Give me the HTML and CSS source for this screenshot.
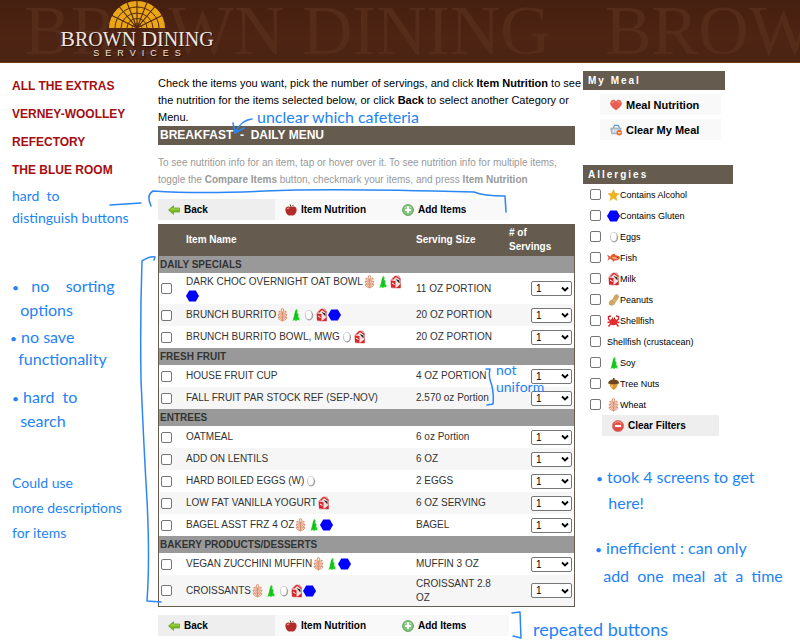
FILE: index.html
```html
<!DOCTYPE html>
<html lang="en">
<head>
<meta charset="utf-8">
<title>Brown Dining Services - Daily Menu</title>
<link rel="stylesheet" href="styles.css">
</head>
<body>
<svg class="sprite" aria-hidden="true">
  <symbol id="wheat" viewBox="0 0 13 14"><g fill="#fbe3d3" stroke="#d98a66" stroke-width=".9"><path d="M6.5 13.500V2"/><ellipse cx="6.500" cy="2.300" rx="1.300" ry="1.800"/><path d="M6.500 6.500Q2.500 6 3 3Q6 4 6.500 6.500Q7 4 10 3Q10.500 6 6.500 6.500Z"/><path d="M6.500 9.500Q2 9 2.200 6Q6 7 6.500 9.500Q7 7 10.800 6Q11 9 6.500 9.500Z"/><path d="M6.500 12.500Q2 12 2.200 9Q6 10 6.500 12.500Q7 10 10.800 9Q11 12 6.500 12.500Z"/></g></symbol>
  <symbol id="soy" viewBox="0 0 13 14"><path d="M7 1L8.500 2L8.300 5L9.500 6L9.300 9L10.500 10L10.300 12.500L8.500 12L7 13L5.500 12L3.500 13L4.500 9.500L5 8L5.600 5Z" fill="#1fd321"/><path d="M7 3L5.800 11M8 6L7.500 11" stroke="#0aa51a" stroke-width=".6"/></symbol>
  <symbol id="egg" viewBox="0 0 13 14"><ellipse cx="7.200" cy="7.500" rx="3.900" ry="5.100" fill="#999"/><ellipse cx="6.700" cy="6.800" rx="3.200" ry="4.500" fill="#fff" stroke="#bbb" stroke-width=".5"/></symbol>
  <symbol id="milk" viewBox="0 0 13 14"><path d="M2 5L5 1.500L10 1L11.500 4V13L2.500 12.800Z" fill="#f3e4e2" stroke="#c0393b" stroke-width=".5"/><path d="M1.800 5.500L6.500 6V13L2 12.300Z" fill="#d9262c"/><path d="M3.500 4.500L7 1.300L11.300 4.500" fill="none" stroke="#d9262c" stroke-width="1.300"/><path d="M6.500 4L10.500 8.500V5.500Z" fill="#222"/><path d="M7 13L11.500 9V13Z" fill="#d9262c"/><path d="M3 8L5.500 9.500" stroke="#fff"/></symbol>
  <symbol id="gluten" viewBox="0 0 13 14"><path d="M3.200 1.500H9.800L13 7L9.800 12.500H3.200L0 7Z" fill="#00f"/></symbol>
  <symbol id="star" viewBox="0 0 13 14"><path d="M6.500 1.500L8.100 5.300L12 5.700L9 8.400L9.900 12.500L6.500 10.300L3 12.500L3.900 8.400L1 5.700L4.900 5.300Z" fill="#f0b41c" stroke="#d99c12" stroke-width=".4"/></symbol>
  <symbol id="fish" viewBox="0 0 13 14"><path d="M0 3.500L3.500 5.800Q5 2.500 7.500 2.800L8.500 4.300Q12 4.300 13 7Q11 9.800 7.500 9.500L6 11L5.500 9.200Q4 8.500 3 7.500L.5 10L1.500 6.800Z" fill="#e4572e"/><path d="M5 6Q8 5 11 7.500Q8 9 5 7Z" fill="#f5a27a"/><circle cx="10.800" cy="6.300" r=".6" fill="#222"/></symbol>
  <symbol id="peanut" viewBox="0 0 13 14"><path d="M10.500 1.800Q12.500 3.500 10.500 6.300Q9.400 7 8.700 8.500Q7.500 12 4.500 12.300Q1.700 12 2.300 9.500Q3 7.500 5.200 6.800Q6.500 6 6.800 4.300Q8 1 10.500 1.800Z" fill="#d9b16c" stroke="#aa7f3c" stroke-width=".6"/><path d="M4 11L6 8M8 6L10 3" stroke="#ac8344" stroke-width=".6"/></symbol>
  <symbol id="crab" viewBox="0 0 13 14"><g fill="none" stroke="#d8232a" stroke-width="1.400"><path d="M3.500 7L1.500 5V2.500L4 2M9.500 7L11.500 5V2.500L9 2M3 8L.5 8.500M10 8L12.500 8.500M3.500 10L1.500 12.500M9.500 10L11.500 12.500"/></g><ellipse cx="6.500" cy="8" rx="3.800" ry="3.200" fill="#e32a2e"/><path d="M5.500 5V3.500M7.500 5V3.500" stroke="#a11"/></symbol>
  <symbol id="nut" viewBox="0 0 13 14"><path d="M2.500 6H10.800Q11 10 6.700 13Q2.300 10 2.500 6Z" fill="#dc962c"/><path d="M1 6.500Q1.500 3 5.800 2.500L6 1H7.500L7.600 2.500Q11.800 3 12.200 6.500Q6.500 8 1 6.500Z" fill="#71451d"/><path d="M5 8V10.500" stroke="#ffe0a0"/></symbol>
  <symbol id="arrow" viewBox="0 0 12 10"><path d="M.5 5L5.500.7V3H11.500V7H5.500V9.300Z" fill="#7dbb22" stroke="#5b9a1d" stroke-width=".7"/><path d="M3 4.600L5 3.500V4H11" stroke="#b9e26c" fill="none" stroke-width=".7"/></symbol>
  <symbol id="apple" viewBox="0 0 12 12"><path d="M6 3.200Q9 1.500 11 3.500Q12.700 6.500 10 10.300Q8.500 12.200 6 11.300Q3.500 12.200 2 10.300Q-.7 6.500 1 3.500Q3 1.500 6 3.200Z" fill="#b32c2c"/><path d="M2 5Q3 3.500 4.500 4.300" stroke="#ea8c84" stroke-width="1.200" fill="none"/><path d="M6 4Q6 2 5.200.5" stroke="#5a3820" fill="none"/><path d="M6 2.500Q7 .3 9.300.8Q8.500 2.700 6 2.500Z" fill="#6d9b37"/></symbol>
  <symbol id="plus" viewBox="0 0 12 12"><circle cx="6" cy="6" r="5.500" fill="#82c57c" stroke="#57a052" stroke-width=".8"/><path d="M3 3.500Q6 1 9 3.500" stroke="#c9eac3" fill="none"/><path d="M6 3V9M3 6H9" stroke="#fff" stroke-width="2"/></symbol>
  <symbol id="heart" viewBox="0 0 13 12"><path d="M6.500 11.500Q.5 7.500.5 4Q.7 1 3.500.7Q5.500.7 6.500 2.500Q7.500.7 9.500.7Q12.300 1 12.500 4Q12.500 7.500 6.500 11.500Z" fill="#ec5f50" stroke="#d24c3e" stroke-width=".6"/><path d="M2 4Q2.500 2 4.500 2.500M8.500 2.500Q10.500 2 11 4" stroke="#f7a397" fill="none"/></symbol>
  <symbol id="basket" viewBox="0 0 13 13"><path d="M3.500 5L5 1.500H9L10.500 5" fill="none" stroke="#5f9ccb" stroke-width="1.300"/><path d="M.8 4.500H12L11 10.500H1.800Z" fill="#bccbd7" stroke="#7e92a6" stroke-width=".7"/><path d="M4 6V9M6.500 6V9" stroke="#fff"/><circle cx="10" cy="9.500" r="3" fill="#ee6a27"/><path d="M8.500 9.500H11.500" stroke="#fff" stroke-width="1.200"/></symbol>
  <symbol id="minus" viewBox="0 0 12 12"><circle cx="6" cy="6" r="5.600" fill="#e3493d" stroke="#cf6d65" stroke-width=".7"/><path d="M2.500 3.500Q6 0 9.500 3.500" stroke="#f3a39b" fill="none"/><path d="M2.800 6H9.200" stroke="#fff" stroke-width="2.200"/></symbol>
</svg>

<header class="banner">
  <div class="watermark" aria-hidden="true"><span>BROWN DINING</span><span>BROWN</span></div>
  <a class="logo" href="#">
    <svg class="arch" viewBox="0 0 58 28" aria-hidden="true">
      <path d="M1 28A28 27 0 0 1 57 28Z" fill="#eba615"/>
      <g fill="none" stroke="#52270f">
        <path d="M7 28A22 21 0 0 1 51 28M13 28A16 15 0 0 1 45 28M19 28A10 9.500 0 0 1 39 28"/>
        <path d="M29 28V0M29 28L18 0M29 28L40 0M29 28L9 4M29 28L49 4M29 28L1 14M29 28L57 14" stroke-width="1.100"/>
        <path d="M24 28A5 4.500 0 0 1 34 28" stroke-width=".8"/>
      </g>
    </svg>
    <span class="brand"><b>B</b>ROWN <b>D</b>INING</span>
    <span class="sub">SERVICES</span>
  </a>
</header>

<div class="page">
  <nav class="places">
    <a href="#">ALL THE EXTRAS</a>
    <a href="#">VERNEY-WOOLLEY</a>
    <a href="#">REFECTORY</a>
    <a href="#">THE BLUE ROOM</a>
  </nav>

  <main>
    <p class="intro">Check the items you want, pick the number of servings, and click <b>Item Nutrition</b> to see<br>the nutrition for the items selected below, or click <b>Back</b> to select another Category or<br>Menu.</p>
    <h1>BREAKFAST &nbsp;-&nbsp; DAILY MENU</h1>
    <p class="hint">To see nutrition info for an item, tap or hover over it. To see nutrition info for multiple items, toggle the <b>Compare Items</b> button, checkmark your items, and press <b>Item Nutrition</b></p>
    <div class="actions">
      <button class="dark"><svg class="ico"><use href="#arrow"/></svg>Back</button>
      <button><svg class="ico"><use href="#apple"/></svg>Item Nutrition</button>
      <button><svg class="ico"><use href="#plus"/></svg>Add Items</button>
    </div>
    <table>
      <colgroup><col class="c-check"><col><col class="c-size"><col class="c-count"></colgroup>
      <thead><tr><th></th><th>Item Name</th><th>Serving Size</th><th># of<br>Servings</th></tr></thead>
      <tbody>
        <tr class="cat"><th colspan="4">DAILY SPECIALS</th></tr>
        <tr class="tall"><td><input type="checkbox" id="i1"></td><td><label for="i1">DARK CHOC OVERNIGHT OAT BOWL<svg><use href="#wheat"/></svg><svg><use href="#soy"/></svg><svg><use href="#milk"/></svg> <svg><use href="#gluten"/></svg></label></td><td>11 OZ PORTION</td><td><select aria-label="Servings"><option>1</option><option>2</option></select></td></tr>
        <tr class="alt"><td><input type="checkbox" id="i2"></td><td><label for="i2">BRUNCH BURRITO<svg><use href="#wheat"/></svg><svg><use href="#soy"/></svg><svg><use href="#egg"/></svg><svg><use href="#milk"/></svg><svg><use href="#gluten"/></svg></label></td><td>20 OZ PORTION</td><td><select aria-label="Servings"><option>1</option><option>2</option></select></td></tr>
        <tr><td><input type="checkbox" id="i3"></td><td><label for="i3">BRUNCH BURRITO BOWL, MWG<svg><use href="#egg"/></svg><svg><use href="#milk"/></svg></label></td><td>20 OZ PORTION</td><td><select aria-label="Servings"><option>1</option><option>2</option></select></td></tr>
      </tbody>
      <tbody>
        <tr class="cat"><th colspan="4">FRESH FRUIT</th></tr>
        <tr><td><input type="checkbox" id="i4"></td><td><label for="i4">HOUSE FRUIT CUP</label></td><td>4 OZ PORTION</td><td><select aria-label="Servings"><option>1</option><option>2</option></select></td></tr>
        <tr class="alt"><td><input type="checkbox" id="i5"></td><td><label for="i5">FALL FRUIT PAR STOCK REF (SEP-NOV)</label></td><td>2.570 oz Portion</td><td><select aria-label="Servings"><option>1</option><option>2</option></select></td></tr>
      </tbody>
      <tbody>
        <tr class="cat"><th colspan="4">ENTREES</th></tr>
        <tr><td><input type="checkbox" id="i6"></td><td><label for="i6">OATMEAL</label></td><td>6 oz Portion</td><td><select aria-label="Servings"><option>1</option><option>2</option></select></td></tr>
        <tr class="alt"><td><input type="checkbox" id="i7"></td><td><label for="i7">ADD ON LENTILS</label></td><td>6 OZ</td><td><select aria-label="Servings"><option>1</option><option>2</option></select></td></tr>
        <tr><td><input type="checkbox" id="i8"></td><td><label for="i8">HARD BOILED EGGS (W)<svg><use href="#egg"/></svg></label></td><td>2 EGGS</td><td><select aria-label="Servings"><option>1</option><option>2</option></select></td></tr>
        <tr class="alt"><td><input type="checkbox" id="i9"></td><td><label for="i9">LOW FAT VANILLA YOGURT<svg><use href="#milk"/></svg></label></td><td>6 OZ SERVING</td><td><select aria-label="Servings"><option>1</option><option>2</option></select></td></tr>
        <tr><td><input type="checkbox" id="i10"></td><td><label for="i10">BAGEL ASST FRZ 4 OZ<svg><use href="#wheat"/></svg><svg><use href="#soy"/></svg><svg><use href="#gluten"/></svg></label></td><td>BAGEL</td><td><select aria-label="Servings"><option>1</option><option>2</option></select></td></tr>
      </tbody>
      <tbody>
        <tr class="cat"><th colspan="4">BAKERY PRODUCTS/DESSERTS</th></tr>
        <tr><td><input type="checkbox" id="i11"></td><td><label for="i11">VEGAN ZUCCHINI MUFFIN<svg><use href="#wheat"/></svg><svg><use href="#soy"/></svg><svg><use href="#gluten"/></svg></label></td><td>MUFFIN 3 OZ</td><td><select aria-label="Servings"><option>1</option><option>2</option></select></td></tr>
        <tr class="alt tall"><td><input type="checkbox" id="i12"></td><td><label for="i12">CROISSANTS<svg><use href="#wheat"/></svg><svg><use href="#soy"/></svg><svg><use href="#egg"/></svg><svg><use href="#milk"/></svg><svg><use href="#gluten"/></svg></label></td><td>CROISSANT 2.8 OZ</td><td><select aria-label="Servings"><option>1</option><option>2</option></select></td></tr>
      </tbody>
    </table>
    <div class="actions">
      <button class="dark"><svg class="ico"><use href="#arrow"/></svg>Back</button>
      <button><svg class="ico"><use href="#apple"/></svg>Item Nutrition</button>
      <button><svg class="ico"><use href="#plus"/></svg>Add Items</button>
    </div>
  </main>

  <aside>
    <section class="meal">
      <h2>My Meal</h2>
      <button><svg class="ico"><use href="#heart"/></svg>Meal Nutrition</button>
      <button><svg class="ico"><use href="#basket"/></svg>Clear My Meal</button>
    </section>
    <section class="allergies">
      <h2>Allergies</h2>
      <ul>
        <li><input type="checkbox" id="a1"><label for="a1"><svg><use href="#star"/></svg>Contains Alcohol</label></li>
        <li><input type="checkbox" id="a2"><label for="a2"><svg><use href="#gluten"/></svg>Contains Gluten</label></li>
        <li><input type="checkbox" id="a3"><label for="a3"><svg><use href="#egg"/></svg>Eggs</label></li>
        <li><input type="checkbox" id="a4"><label for="a4"><svg><use href="#fish"/></svg>Fish</label></li>
        <li><input type="checkbox" id="a5"><label for="a5"><svg><use href="#milk"/></svg>Milk</label></li>
        <li><input type="checkbox" id="a6"><label for="a6"><svg><use href="#peanut"/></svg>Peanuts</label></li>
        <li><input type="checkbox" id="a7"><label for="a7"><svg><use href="#crab"/></svg>Shellfish</label></li>
        <li><input type="checkbox" id="a8"><label for="a8">Shellfish (crustacean)</label></li>
        <li><input type="checkbox" id="a9"><label for="a9"><svg><use href="#soy"/></svg>Soy</label></li>
        <li><input type="checkbox" id="a10"><label for="a10"><svg><use href="#nut"/></svg>Tree Nuts</label></li>
        <li><input type="checkbox" id="a11"><label for="a11"><svg><use href="#wheat"/></svg>Wheat</label></li>
      </ul>
      <button class="dark"><svg class="ico"><use href="#minus"/></svg>Clear Filters</button>
    </section>
  </aside>
</div>

<!-- Review notes pinned over the page -->
<div class="notes">
  <svg class="ink" viewBox="0 0 800 643" aria-hidden="true">
    <path d="M252 119Q241 120 235 133M233 123L235 133L244 128"/>
    <path d="M110 205L141 203M151 206Q146 195 153 191Q200 194 265 191T474 192Q483 196 505 196L506 212"/>
    <path d="M142 261Q140 320 141 380Q144 450 147 500Q150 560 147 601L161 602M142 261Q150 256 155 257L154 260"/>
    <path d="M486 369L490 369Q488 376 492 386Q494 396 493 404L487 405"/>
    <path d="M512 613L520 612L521 638L513 636"/>
  </svg>
  <p class="note n-cafe">unclear which cafeteria</p>
  <p class="note n-buttons">hard &nbsp;to<br>distinguish buttons</p>
  <p class="note n-sort"><i>•</i> &nbsp; no &nbsp; &nbsp;sorting<br>&nbsp; options</p>
  <p class="note n-save"><i>•</i> no save<br>&nbsp; functionality</p>
  <p class="note n-search"><i>•</i> hard &nbsp;to<br>&nbsp; search</p>
  <p class="note n-desc">Could use<br>more descriptions<br>for items</p>
  <p class="note n-uniform">not<br>uniform</p>
  <p class="note n-screens"><i>•</i> took 4 screens to get<br>&nbsp; &nbsp;here!</p>
  <p class="note n-time"><i>•</i> inefficient : can only<br>&nbsp; add &nbsp;one &nbsp;meal &nbsp;at &nbsp;a &nbsp;time</p>
  <p class="note n-repeat">repeated buttons</p>
</div>
</body>
</html>
```
FILE: styles.css
```css
* { box-sizing: border-box; }
body {
  margin: 0;
  position: relative;
  background: #fff;
  color: #000;
  font: 10px/14px "Liberation Sans", Arial, sans-serif;
}
p, h1, h2, ul { margin: 0; padding: 0; }
a { text-decoration: none; }
.sprite { position: absolute; width: 0; height: 0; }

/* Banner */
.banner {
  position: relative;
  height: 63px;
  overflow: hidden;
  background: linear-gradient(#451f0f, #4e2413 60%, #4b2414);
  border-bottom: 1px solid #743a1c;
}
.watermark {
  position: absolute;
  top: 0;
  left: 24px;
  display: flex;
  gap: 54px;
  white-space: nowrap;
  font: 70px/62px "Liberation Serif", serif;
  color: #552b1a;
}
.logo {
  position: relative;
  display: flex;
  flex-direction: column;
  align-items: center;
  width: 158px;
  margin-left: 58px;
  color: #efe6e0;
  text-shadow: 1px 1px 1px #241008;
}
.arch { width: 58px; height: 28px; }
.brand { font: 20px/22px "Liberation Serif", serif; white-space: nowrap; }
.brand b { font-size: 22px; font-weight: 400; }
.sub { font-size: 9px; line-height: 6px; letter-spacing: 6px; padding-left: 6px; }

/* Columns */
.page {
  display: grid;
  grid-template-columns: 146px minmax(0, 1fr) 225px;
  padding: 8px 0 0 12px;
}
.places { display: flex; flex-direction: column; gap: 14px; padding-top: 8px; }
.places a { color: #a60d12; font-size: 12px; font-weight: 700; }

.intro { padding-top: 4px; font-size: 11px; line-height: 17px; white-space: nowrap; }
h1 { padding: 0 2px; background: #655c4f; color: #fff; font-size: 12px; line-height: 19px; }
.hint { padding-top: 9px; color: #999; font-size: 10px; line-height: 17px; }

button {
  display: flex;
  align-items: center;
  gap: 4px;
  height: 21px;
  padding: 0 10px;
  border: 0;
  background: #f9f9f9;
  color: #000;
  font: 700 10px/14px "Liberation Sans", Arial, sans-serif;
}
button.dark { background: #eee; }
.ico { width: 12px; height: 12px; }
.actions { display: grid; grid-template-columns: repeat(3, 117px); padding: 11px 0 4px; }
table + .actions { padding: 8px 0 6px; }

/* Menu table */
table {
  width: 100%;
  table-layout: fixed;
  border: 1px solid #655c4f;
  border-top: 0;
  border-collapse: separate;
  border-spacing: 0;
  color: #333;
}
.c-check { width: 26px; }
.c-size { width: 93px; }
.c-count { width: 66px; }
th, td { height: 22px; padding: 0 1px; text-align: left; vertical-align: middle; }
thead th { height: 32px; background: #655c4f; color: #fff; }
.cat th { height: 17px; background: #999; }
.tall td { height: 31px; }
.alt td { background: #f6f6f6; }
td:last-child { text-align: right; }
td svg { width: 13px; height: 14px; vertical-align: -4px; }
label svg { flex: none; }
input[type="checkbox"] {
  display: block;
  appearance: none;
  width: 11px;
  height: 11px;
  margin: 0 0 0 1px;
  border: 1px solid #767676;
  border-radius: 2px;
  background: #fff;
}
select {
  appearance: none;
  display: inline-block;
  width: 41px;
  height: 15px;
  margin-right: 1px;
  padding: 0 4px;
  border: 1px solid #767676;
  border-radius: 2px;
  color: #000;
  font: 10px/13px "Liberation Sans", Arial, sans-serif;
  vertical-align: middle;
  background: #fff url("data:image/svg+xml,%3Csvg xmlns='http://www.w3.org/2000/svg' viewBox='0 0 8 6'%3E%3Cpath d='M1 1.500L4 4.500L7 1.500' fill='none' stroke='black' stroke-width='1.800'/%3E%3C/svg%3E") no-repeat right 2px center / 8px 6px;
}

/* Sidebar */
aside { padding: 0 0 0 8px; }
h2 {
  padding: 0 5px;
  background: #655c4f;
  color: #fff;
  font-size: 10px;
  line-height: 19px;
  letter-spacing: 2px;
}
.meal { display: grid; gap: 4px; width: 142px; }
.meal button { width: 121px; margin-left: 17px; font-size: 11px; }
.allergies { width: 150px; margin-top: 25px; }
.allergies ul { list-style: none; }
.allergies li { display: flex; align-items: center; gap: 6px; height: 21px; padding-left: 6px; font-size: 9px; }
.allergies label { display: flex; align-items: center; }
.allergies svg { width: 13px; height: 14px; }
.allergies button { width: 117px; margin-left: 19px; }
.allergies .ico { width: 12px; height: 12px; }

/* Review notes */
.notes { position: absolute; inset: 0; pointer-events: none; color: #2383f5; }
.ink { position: absolute; top: 0; left: 0; width: 800px; height: 643px; fill: none; stroke: #2b87f3; stroke-width: 1.500; stroke-linecap: round; stroke-linejoin: round; }
.note { position: absolute; white-space: nowrap; font: 16px/22px Lato, sans-serif; }
.note i { font-style: normal; font-size: 12px; }
.n-cafe { left: 257px; top: 106px; }
.n-buttons { left: 12px; top: 185px; font-size: 14px; }
.n-sort { left: 12px; top: 275px; }
.n-save { left: 10px; top: 327px; line-height: 20px; }
.n-search { left: 12px; top: 386px; }
.n-desc { left: 12px; top: 470px; line-height: 25px; font-size: 14px; }
.n-uniform { left: 496px; top: 361px; font-size: 14px; line-height: 17px; }
.n-screens { left: 596px; top: 465px; line-height: 24px; }
.n-time { left: 595px; top: 535px; line-height: 26px; }
.n-repeat { left: 533px; top: 618px; font-size: 18px; }
```
